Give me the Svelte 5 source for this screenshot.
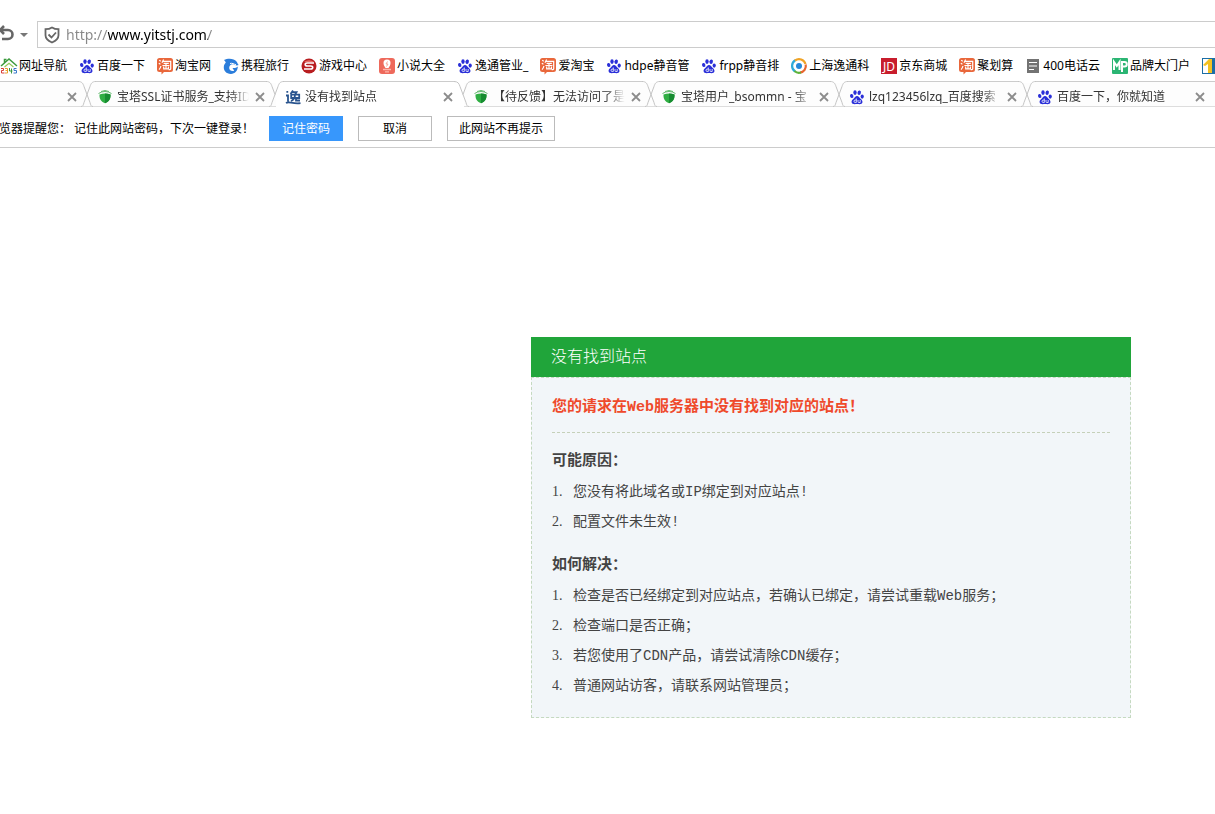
<script>
  const bookmarks = [
    ['nav', '网址导航'], ['paw', '百度一下'], ['tao', '淘宝网'], ['dolphin', '携程旅行'],
    ['game', '游戏中心'], ['novel', '小说大全'], ['paw', '逸通管业_'], ['tao', '爱淘宝'],
    ['paw', 'hdpe静音管'], ['paw', 'frpp静音排'], ['ring', '上海逸通科'], ['jd', '京东商城'],
    ['tao', '聚划算'], ['doc', '400电话云'], ['mp', '品牌大门户'], ['one', '']
  ];
  const tabs = [
    { icon: 'shield', title: '宝塔SSL证书服务_支持ID' },
    { icon: 'yi', title: '没有找到站点', active: true },
    { icon: 'shield', title: '【待反馈】无法访问了是' },
    { icon: 'shield', title: '宝塔用户_bsommn - 宝' },
    { icon: 'paw', title: 'lzq123456lzq_百度搜索' },
    { icon: 'paw', title: '百度一下，你就知道' }
  ];
  const reasons = ['您没有将此域名或IP绑定到对应站点!', '配置文件未生效!'];
  const fixes = [
    '检查是否已经绑定到对应站点，若确认已绑定，请尝试重载Web服务；',
    '检查端口是否正确；',
    '若您使用了CDN产品，请尝试清除CDN缓存；',
    '普通网站访客，请联系网站管理员；'
  ];
</script>

{#snippet icon(name)}
  <svg class="icon" width="16" height="16" viewBox="0 0 16 16" aria-hidden="true">
    {#if name === 'paw'}
      <g fill="#2a2fd8">
        <ellipse cx="2.7" cy="7" rx="1.7" ry="2.1" transform="rotate(-12 2.7 7)" />
        <ellipse cx="6" cy="3.6" rx="1.7" ry="2.3" />
        <ellipse cx="10.2" cy="3.7" rx="1.7" ry="2.3" transform="rotate(12 10.2 3.7)" />
        <ellipse cx="13.2" cy="7.6" rx="1.6" ry="2.1" />
        <path d="M8 7c1.7 0 2.3 1.5 3.5 2.7 1.3 1.2 2.3 2.1 1.9 3.8-.5 1.9-2.3 1.8-5.4 1.5-3.1.3-5 .2-5.4-1.7-.3-1.6.8-2.6 2-3.6C5.900 8.600 6.300 7 8 7z" />
      </g>
      <path d="M7.300 9.500v4H6.200a1.200 1.200 0 0 1 0-2.400h1.100M9 11v1.700q0 .8.8.8h1.400V11" fill="none" stroke="#fff" stroke-width=".8" />
    {:else if name === 'tao'}
      <path d="M2.500 0h11A2.500 2.500 0 0 1 16 2.500v9a2.500 2.500 0 0 1-2.500 2.500H7l-2.500 2.500V14h-2A2.500 2.500 0 0 1 0 11.500v-9A2.500 2.500 0 0 1 2.500 0z" fill="#e9673b" />
      <g fill="none" stroke="#fff" stroke-width="1.200">
        <path d="M2.200 2.300l1.600 1M1.800 5.200l1.600 1M2 11.600c1.200-1 1.700-2.300 1.900-3.600M6.600 1.600L5 4.800M6 3.400h7.700v7q0 1.400-2 1.200M6.600 5.400h5.200M5.400 7.500h7M9 5.400v5.400M6.700 8.600v2.300h4.700V8.600" />
      </g>
    {:else if name === 'nav'}
      <path d="M0 8l8-7 8 7M3.500 5V1.500H5.500" fill="none" stroke="#3b9a3d" stroke-width="1.500" />
      <path d="M3.500 9L8 5.200 12.500 9" fill="none" stroke="#93ca5a" stroke-width="1.200" />
      <path d="M0 10.500h2.500v2H.5v2.500H3.500" fill="none" stroke="#d93d37" />
      <path d="M4 10.500h2.500v4.500H4M4.500 12.500h2" fill="none" stroke="#e9a02e" />
      <path d="M8.500 10v3h3M10.500 10.500V15.500" fill="none" stroke="#399742" />
      <path d="M15.500 10.500H13v2h2.500v2.500H12.500" fill="none" stroke="#3978ca" />
    {:else if name === 'dolphin'}
      <path d="M1 2c4-2 10-1.700 12.500 1.500.8 1 1.200 2.500 2.200 3.500-2 1-3.700.2-5.200-.7C8 5.500 6 7.600 6.200 10c.2 2.500 2.400 3.500 5 2.700L9.500 10c2 .3 3.500 0 5.300-1.500 0 4.500-3 7.500-7 7.400C3.300 15.800.5 12.700.8 9c.1-2 .9-3.400 2-4.500C2.500 3.500 1.800 2.800 1 2z" fill="#2b7ddb" />
      <path d="M7 5.500c2-.8 4 .7 6 1.300" fill="none" stroke="#fff" />
    {:else if name === 'game'}
      <circle cx="8" cy="8" r="7.500" fill="#b81d20" />
      <path d="M3 4a7 6 0 0 1 10 0z" fill="#e77069" />
      <path d="M13 5H6.200Q4.200 5 4.200 6.500T6.200 8h3.500q2 0 2 1.500T9.700 11H3" fill="none" stroke="#fff" stroke-width="1.600" />
    {:else if name === 'novel'}
      <rect width="16" height="16" rx="3" fill="#ee695b" />
      <path d="M8 1.500c2.500 0 3.500 1.500 3.500 3.500 0 2-1 3.500-2 5h-3c-1-1.500-2-3-2-5 0-2 1-3.500 3.500-3.500z" fill="#fff" />
      <path d="M4 11.500h8M6 13.800h4" stroke="#ffb5aa" stroke-width="1.300" />
      <path d="M8.500 3.500L7 6h2L7.500 8.500" fill="none" stroke="#f5a79d" />
    {:else if name === 'ring'}
      <g fill="none" stroke-width="2.200">
        <path d="M4 13.500A6.700 6.700 0 0 1 4.200 2.300" stroke="#2eabd8" />
        <path d="M4 2.500A6.700 6.700 0 0 1 14.500 6" stroke="#f0a326" />
        <path d="M14.700 6.500A6.700 6.700 0 0 1 9 14.600" stroke="#e8662f" />
        <path d="M10 14.500A6.700 6.700 0 0 1 3.500 13" stroke="#5db23a" />
      </g>
      <circle cx="8" cy="8" r="3" fill="#2588d9" />
    {:else if name === 'jd'}
      <rect width="16" height="16" fill="#c81d2d" />
      <text x="8" y="12.500" font-size="12" text-anchor="middle" fill="#fff">JD</text>
    {:else if name === 'doc'}
      <rect x="2" y="1" width="12" height="14" fill="#737373" />
      <path d="M4 4.500h8M4 8h8M4 11.500h5" stroke="#fff" stroke-width="1.200" />
    {:else if name === 'mp'}
      <rect width="16" height="16" rx="1" fill="#2bb573" />
      <path d="M2 12V4l2.800 4L7.500 4v8M10 14V4h2.500a2.300 2.300 0 0 1 0 4.600H10" fill="none" stroke="#fff" stroke-width="2" />
    {:else if name === 'one'}
      <rect width="16" height="16" fill="#1c6ea5" />
      <path d="M1 1h8v14H1z" fill="#fff" />
      <path d="M1 7l6-6h3v14H6V6L3 8z" fill="#f3c222" />
    {:else if name === 'shield'}
      <path d="M2.500 5.500Q8 3.500 13.500 5.500c.2 4-1 7-5.500 8.800C3.500 12.500 2.300 9.500 2.500 5.500z" fill="#2fae43" />
      <path d="M8 4.500v9.800c4.500-1.800 5.700-4.800 5.500-8.800Q11 4.500 8 4.500z" fill="#178c31" />
      <path d="M1.500 4.500Q8 .5 14.500 4.500M4 2.500Q8 .5 12 2.500" fill="none" stroke="#62b86d" />
    {:else if name === 'yi'}
      <g fill="none" stroke="#29548e" stroke-width="1.800">
        <path d="M2.300 2v1.800M1 6.500h2v6M1 14c3-2 6 1.200 14.500.2M8 1.500L5.500 5M7 3.200h4.500L10 5.500M6.200 5.700h8V9h-8zM10 5.500c0 4-1.500 5.500-4 6.500M11 9v2.500h4" />
      </g>
    {/if}
  </svg>
{/snippet}

{#snippet closeButton()}
  <button class="close" aria-label="关闭标签">
    <svg width="10" height="10" viewBox="0 0 10 10"><path d="M1 1l8 8M9 1L1 9" stroke="#8c8c8c" stroke-width="1.800" /></svg>
  </button>
{/snippet}

<header>
  <div class="address">
    <button class="undo" aria-label="恢复">
      <svg width="30" height="20" viewBox="0 0 30 20">
        <path d="M0 5h8a4.500 4.500 0 0 1 0 9H2M4 1L0 5l4 4" fill="none" stroke="#666" stroke-width="2.600" />
        <path d="M20 8h8l-4 4z" fill="#777" />
      </svg>
    </button>
    <label class="url">
      <svg width="16" height="18" viewBox="0 0 16 18" aria-hidden="true">
        <path d="M8 1.500c2 1.300 4 1.700 6.500 1.700v6c0 3.500-2.500 5.500-6.500 7.300-4-1.800-6.500-3.800-6.500-7.300v-6C4 3.200 6 2.800 8 1.500z" fill="none" stroke="#666" stroke-width="1.800" />
        <path d="M4.500 8.500l3 3 4.500-5" fill="none" stroke="#666" stroke-width="1.800" />
      </svg>
      <input type="text" aria-label="地址" value="http://www.yitstj.com/" />
    </label>
  </div>

  <nav class="bookmarks">
    {#each bookmarks as [name, label]}
      <a href="#top" aria-label={label || '收藏'}>{@render icon(name)}<span>{label}</span></a>
    {/each}
  </nav>

  <div class="tabs">
    <div class="tab first">
      {@render closeButton()}
    </div>
    {#each tabs as tab, i}
      <div class="tab" class:active={tab.active}>
        <svg class="edge" width="18" height="26" viewBox="0 0 18 26" aria-hidden="true">
          <path class="gap" d="M1 0h16v2H1z" />
          <path d={tab.active ? 'M0 .5c4 0 5 2 6 5l3 8' : 'M0 .5c4 0 5 2 6 5l6 16c.7 2.500 1 4 3 4'} />
          <path d={tabs[i - 1]?.active ? 'M18 .5c-4 0-5 2-6 5l-3 8' : 'M18 .5c-4 0-5 2-6 5l-6 16c-.7 2.500-1 4-3 4'} />
        </svg>
        <a href="#top">{@render icon(tab.icon)}<span>{tab.title}</span></a>
        {@render closeButton()}
      </div>
    {/each}
  </div>

  <div class="prompt">
    <span class="who">览器提醒您：</span>
    <span class="message">记住此网站密码，下次一键登录！</span>
    <button class="primary">记住密码</button>
    <button>取消</button>
    <button class="wide">此网站不再提示</button>
  </div>
</header>

<main>
  <section>
    <h1>没有找到站点</h1>
    <div class="body">
      <p class="error">您的请求在Web服务器中没有找到对应的站点！</p>
      <h2>可能原因：</h2>
      <ol>
        {#each reasons as text}<li>{text}</li>{/each}
      </ol>
      <h2>如何解决：</h2>
      <ol>
        {#each fixes as text}<li>{text}</li>{/each}
      </ol>
    </div>
  </section>
</main>

<style>
  :global(body) {
    margin: 0;
    background: #fff;
    overflow-x: hidden;
    font: 12px/16px "Noto Sans", "Noto Sans CJK SC", sans-serif;
    color: #000;
  }
  header {
    border-bottom: 1px solid #ccc;
    overflow: hidden;
  }
  a { color: inherit; text-decoration: none; }
  button {
    font: inherit;
    color: inherit;
    padding: 0;
    border: 0;
    background: none;
  }
  svg { display: block; flex: none; }
  .icon { overflow: visible; }
  .address {
    display: flex;
    align-items: center;
    padding-top: 21px;
  }
  .undo { width: 37px; flex: none; }
  .url {
    flex: 1;
    display: flex;
    align-items: center;
    gap: 6px;
    height: 25px;
    padding-left: 6px;
    border: 1px solid #ccc;
    border-right: 0;
  }
  .url input {
    flex: 1;
    min-width: 0;
    padding: 0;
    border: 0;
    outline: 0;
    font: 14px/20px "Noto Sans", sans-serif;
    color: transparent;
    caret-color: #000;
    background: linear-gradient(to right, #888 42px, #000 42px 142px, #888 142px);
    background-clip: text;
  }
  .bookmarks {
    display: flex;
    gap: 12px;
    box-sizing: border-box;
    height: 33px;
    padding: 3px 0 0 1px;
    white-space: nowrap;
  }
  .bookmarks a {
    display: flex;
    align-items: center;
    gap: 2px;
    flex: none;
  }
  .tabs { display: flex; height: 26px; }
  .tab {
    position: relative;
    flex: none;
    box-sizing: border-box;
    display: flex;
    align-items: center;
    width: 188px;
    padding: 5px 11px 0 9px;
    border-top: 1px solid #ccc;
    border-bottom: 1px solid #ddd;
    background: #fdfdfd;
  }
  .tab.first { width: 88px; justify-content: flex-end; }
  .tab.active { background: #fff; border-bottom-color: #fff; }
  .edge { position: absolute; left: -10px; top: -1px; }
  .edge path { fill: none; stroke: #c4c4c4; }
  .edge .gap { fill: #fff; stroke: none; }
  .tab a {
    display: flex;
    align-items: center;
    gap: 4px;
    flex: 1;
    min-width: 0;
    overflow: hidden;
    white-space: nowrap;
    color: #333;
    mask-image: linear-gradient(to right, #000 88%, transparent);
  }
  .close { width: 10px; margin-left: 6px; }
  .prompt {
    display: flex;
    align-items: center;
    box-sizing: border-box;
    height: 40px;
    padding-top: 3px;
    white-space: nowrap;
  }
  .who { margin-left: -1px; width: 75px; }
  .message { width: 195px; }
  .prompt button {
    box-sizing: border-box;
    width: 74px;
    height: 25px;
    padding-top: 1px;
    margin-right: 15px;
    border: 1px solid #bbb;
  }
  .prompt .primary { background: #3797fc; border-color: #3797fc; color: #fff; }
  .prompt .wide { width: 108px; }
  main { padding: 189px 20px 95px 531px; }
  section {
    max-width: 600px;
    font-family: "Liberation Mono", "Noto Sans CJK SC", monospace;
    color: #444;
  }
  h1 {
    margin: 0;
    padding: 2px 0 0 20px;
    background: #20a53a;
    color: #fff;
    font-size: 16px;
    font-weight: 300;
    line-height: 38px;
  }
  .body {
    padding: 15px 20px 16px;
    border: 1px dashed #c5d9c0;
    background: #f2f6f9;
  }
  .error {
    margin: 0 0 14px;
    padding-bottom: 9px;
    border-bottom: 1px dashed #c5d0b9;
    color: #ef4a2b;
    font-size: 15px;
    font-weight: 700;
    line-height: 30px;
  }
  h2 { margin: 0; font-size: 15px; line-height: 30px; }
  ol {
    margin: 0 0 14px;
    padding-left: 21px;
    font-size: 14px;
    line-height: 30px;
  }
  ol:last-child { margin-bottom: 0; }
  li::marker {
    content: counter(list-item) ".\a0\a0\a0";
    font-family: "Liberation Serif", serif;
  }
</style>
